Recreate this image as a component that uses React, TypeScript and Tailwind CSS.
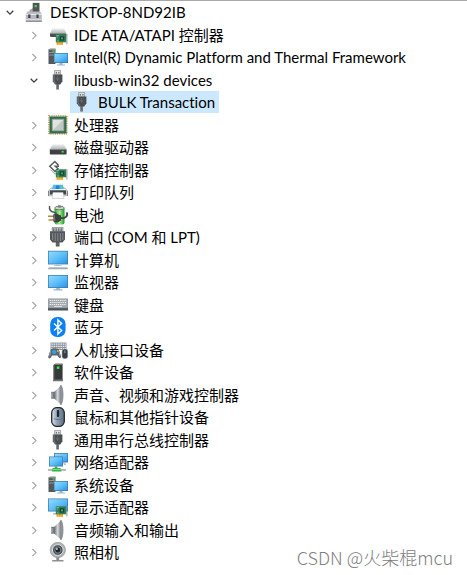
import { useState, type ReactNode } from "react";

function Defs() {
  return (
    <svg className="absolute h-0 w-0" aria-hidden="true">
      <defs>
        <linearGradient id="screen" x1="0" y1="0" x2="1" y2="1">
          <stop offset="0" stopColor="#8fdcff" />
          <stop offset="0.5" stopColor="#5fbff8" />
          <stop offset="1" stopColor="#2b93ea" />
        </linearGradient>
        <linearGradient id="metal" x1="0" y1="0" x2="1" y2="0">
          <stop offset="0" stopColor="#6c7076" />
          <stop offset="0.5" stopColor="#d8dadd" />
          <stop offset="1" stopColor="#7c8188" />
        </linearGradient>
        <linearGradient id="steel" x1="0" y1="0" x2="0" y2="1">
          <stop offset="0" stopColor="#f1f2f3" />
          <stop offset="1" stopColor="#adb0b3" />
        </linearGradient>
        <linearGradient id="battery" x1="0" y1="0" x2="1" y2="0">
          <stop offset="0" stopColor="#2a9c2f" />
          <stop offset="0.5" stopColor="#a4f095" />
          <stop offset="1" stopColor="#1e9328" />
        </linearGradient>
        <linearGradient id="mouse" x1="0" y1="0" x2="1" y2="0">
          <stop offset="0" stopColor="#dfe6ee" />
          <stop offset="0.4" stopColor="#93a4b8" />
          <stop offset="1" stopColor="#5d6d82" />
        </linearGradient>
      </defs>
    </svg>
  );
}

function Icon({ children }: { children: ReactNode }) {
  return (
    <svg viewBox="0 0 20 20" className="h-5 w-5 shrink-0" aria-hidden="true">
      {children}
    </svg>
  );
}

function Screen({ x, y, w, h }: { x: number; y: number; w: number; h: number }) {
  return (
    <>
      <rect x={x} y={y} width={w} height={h} fill="#3f78a6" />
      <rect x={x + 0.7} y={y + 0.7} width={w - 1.4} height={h - 1.4} fill="url(#screen)" />
    </>
  );
}

function Tower() {
  return (
    <>
      <path d="M0.5 2.5 2 1.7H7.5V17H0.5Z" fill="#54585c" />
      <path d="M0.5 2.5 2 1.7H7.5V3.2H0.5Z" fill="#8d9195" />
      <path d="M1.2 5.5H6.8M1.2 8H6.8" stroke="#a3a8ac" strokeWidth="0.8" />
      <rect x="4.5" y="3.3" width="2.2" height="1.4" fill="#37d13c" />
    </>
  );
}

function Card() {
  return (
    <g transform="translate(0 9)">
      <rect x="8.5" y="8" width="6.5" height="2.8" fill="#f0a01c" />
      <path d="M10.5 8.5V10.8M12.7 8.5V10.8" stroke="#ffd056" strokeWidth="0.6" />
      <rect x="7.8" y="0.3" width="10.5" height="8" fill="#2f8055" />
      <path d="M8.5 1.5H11M8.5 3H10M9 7H11" stroke="#8fcba6" strokeWidth="0.7" />
      <rect x="11.7" y="2.2" width="4.6" height="4.4" fill="#174632" />
      <rect x="13" y="3.4" width="2" height="2" fill="#4e9c75" />
      <path d="M18.9 0V10.5" stroke="#8b9095" strokeWidth="0.9" />
    </g>
  );
}

function RootIcon() {
  return (
    <Icon>
      <path d="M5.5 9.5V8L9 6V0.8H15.5V12H5.5Z" fill="#a4a8ab" />
      <path d="M8.7 1H15.3V10H8.7Z" fill="#505458" />
      <rect x="10.6" y="3" width="2.2" height="2.2" fill="#3fdc46" />
      <path d="M3.5 9.5H16L17.8 12V20H1.8V12Z" fill="#b6babe" />
      <path d="M1.8 12.3H17.8" stroke="#f1f2f3" strokeWidth="1" />
      <path d="M1.8 17.5H17.8" stroke="#d9dbdd" strokeWidth="1" />
      <path d="M5.3 12.6V16M13.5 12.6V16" stroke="#3e4246" strokeWidth="2.2" />
      <path d="M1.8 19.3H17.8" stroke="#888c90" strokeWidth="1" />
    </Icon>
  );
}

function IdeIcon() {
  return (
    <Icon>
      <path d="M4.2 3.4H16.2L18.2 8.6H2Z" fill="url(#steel)" />
      <path d="M2 8.6H18.2V12H3L2 11.2Z" fill="#4b4e51" />
      <path d="M2 8.6H18.2" stroke="#85898c" strokeWidth="0.6" />
      <Card />
    </Icon>
  );
}

function TowerScreenIcon() {
  return (
    <Icon>
      <Tower />
      <Screen x={5.8} y={6} w={14.2} h={10} />
      <path d="M11.5 16H14.5V17.5H17V18.4H9V17.5H11.5Z" fill="#9eb6c8" />
    </Icon>
  );
}

function UsbIcon() {
  return (
    <Icon>
      <path d="M6.6 0.4H12.6V5H6.6Z" fill="#dcdee0" stroke="#909498" strokeWidth="0.8" />
      <path d="M7.8 2.8H9M10.3 2.8H11.5" stroke="#505458" strokeWidth="1.2" />
      <path d="M4.8 4.4H14.4V11.2L12.3 14.5H7L4.8 11.2Z" fill="#4c4f52" />
      <path d="M6 5V11L7.5 13.5" stroke="#777b7f" strokeWidth="1" fill="none" />
      <path d="M9.6 6V11M7.9 8 9.6 10 11.4 8" stroke="#707478" strokeWidth="0.7" fill="none" />
      <path d="M9.6 14V19.5" stroke="#5c5f62" strokeWidth="2.6" />
      <path d="M8.3 16H11M8.3 18H11" stroke="#9a9da0" strokeWidth="0.5" />
    </Icon>
  );
}

function ChipIcon() {
  return (
    <Icon>
      <rect x="0.9" y="0.9" width="18" height="18" fill="none" stroke="#c5a855" strokeWidth="1.6" strokeDasharray="1 0.8" />
      <rect x="1.5" y="1.5" width="17" height="17" fill="#356a51" />
      <rect x="4.2" y="4.2" width="11.6" height="11.6" fill="#bfc8c2" stroke="#98ac9f" strokeWidth="0.8" />
      <path d="M5 15V5H15Z" fill="#e0e4e1" />
    </Icon>
  );
}

function DiskIcon() {
  return (
    <Icon>
      <path d="M4.5 7.2H15.8L18.6 12.6H1.8Z" fill="url(#steel)" />
      <path d="M1.8 12.4H18.6V17L18 17.5H2.4L1.8 17Z" fill="#3e4144" />
      <path d="M1.8 12.6H18.6" stroke="#7b7f82" strokeWidth="0.6" />
      <rect x="13.6" y="13.8" width="2.2" height="1.8" fill="#35df3b" />
    </Icon>
  );
}

function StorageIcon() {
  return (
    <Icon>
      <path d="M10.5 5.2 6.8 1.5 1.8 6.3 7 11.5 10 8.7 7.3 6.2H11" fill="none" stroke="#595d61" strokeWidth="1.5" />
      <path d="M2.5 9.8 7 14.2 9 12.5" fill="none" stroke="#a2a6aa" strokeWidth="1" />
      <Card />
    </Icon>
  );
}

function PrinterIcon() {
  return (
    <Icon>
      <path d="M3 5.5H17L20 8.5V14.2H0V8.5Z" fill="#bfc3c7" />
      <path d="M5 2.8H15L16 7.5H4Z" fill="#58b8ef" />
      <path d="M8 3.5H11.5V7.5H7.6Z" fill="#2482d8" />
      <path d="M12 3.5H14L14.8 7.5H12Z" fill="#48cab0" />
      <path d="M2.3 7H17.7L18.4 8.2H1.6Z" fill="#eff1f2" />
      <path d="M2 8.3H18V12.5H2Z" fill="#43484c" />
      <path d="M0.4 9V14M19.6 9V14" stroke="#71767b" strokeWidth="0.9" />
      <path d="M5 10.5H15L16 16.5H4Z" fill="#fafafa" stroke="#bfc3c6" strokeWidth="0.6" />
    </Icon>
  );
}

function BatteryIcon() {
  return (
    <Icon>
      <rect x="6.5" y="2" width="10" height="17.5" rx="2.2" fill="url(#battery)" />
      <ellipse cx="11.5" cy="3" rx="4.8" ry="1.8" fill="#c9d6c8" stroke="#4b5c4d" strokeWidth="0.7" />
      <ellipse cx="11.5" cy="1.5" rx="2.2" ry="1.2" fill="#7d8387" />
      <path d="M1.6 1C0.8 5 3 6.8 6 7.2 9 7.5 8 10 8.5 11" stroke="#505458" strokeWidth="1.5" fill="none" />
      <path d="M0 11.3H6M0.5 15H6" stroke="#b08b35" strokeWidth="1.5" />
      <path d="M5.2 9.5 8.5 8.8 13 10.5V15.5L9.5 17.5 5.6 17Z" fill="#3c3f41" />
      <path d="M12.5 13C17 14 20.5 11 18.6 7.3" fill="none" stroke="#404346" strokeWidth="1.8" />
      <path d="M6.4 10.3 6.8 16" stroke="#85888a" strokeWidth="0.8" />
    </Icon>
  );
}

function PortIcon() {
  return (
    <Icon>
      <path d="M4.2 0.3H15V4.8H4.2Z" fill="#b9bcbf" stroke="#777b7f" strokeWidth="0.7" />
      <path d="M5.8 1.5V4M8.2 1.5V4M10.8 1.5V4M13.2 1.5V4" stroke="#45484b" strokeWidth="0.9" />
      <path d="M2 4.3H17V12.5L14.5 15.5H11.5V19.5H7.8V15.5H4.5L2 12.5Z" fill="#55585b" />
      <path d="M4.6 6V13M7.2 6V14M9.8 6V14M12.4 6V14M14.8 6V13" stroke="#94979a" strokeWidth="0.8" />
      <path d="M7.8 17H11.5" stroke="#888b8e" strokeWidth="0.6" />
    </Icon>
  );
}

function ComputerIcon() {
  return (
    <Icon>
      <Screen x={0} y={0.8} w={20} h={13.6} />
      <path d="M8.5 14.4H11.5V15.3H14V16.1H6V15.3H8.5Z" fill="#abc0d0" />
      <path d="M1 17H19L20 19H0Z" fill="#b8c7d3" />
      <path d="M0 18.8H20" stroke="#8395a3" strokeWidth="0.7" />
    </Icon>
  );
}

function MonitorIcon() {
  return (
    <Icon>
      <Screen x={0} y={3} w={20} h={13} />
      <path d="M8.2 16H11.8V17.3H14.5V18.4H5.5V17.3H8.2Z" fill="#9fb6c9" />
    </Icon>
  );
}

function KeyboardIcon() {
  return (
    <Icon>
      <path d="M0 3.5H20V14.5H0Z" fill="#8e949b" />
      <path d="M0.5 4H19.5V12.5H0.5Z" fill="#a3a9af" />
      <path d="M1.5 5.5H18.5M2 7.5H18M1.5 9.5H18.5" stroke="#e6e8ea" strokeWidth="1.1" strokeDasharray="1.4 0.7" />
      <path d="M6 11.4H14" stroke="#e6e8ea" strokeWidth="0.9" />
      <path d="M0 13.2H20V15.5H0Z" fill="#4c535b" />
    </Icon>
  );
}

function BluetoothIcon() {
  return (
    <Icon>
      <rect x="2.2" y="0" width="15.4" height="20" rx="7" fill="#0a80f2" />
      <path d="M6 6.4 13.6 13.5 9.9 17V3L13.6 6.5 6 13.6" stroke="#fff" strokeWidth="1.4" fill="none" />
    </Icon>
  );
}

function HidIcon() {
  return (
    <Icon>
      <path d="M2.5 2.5H18.5V10H2.5Z" fill="#8f969e" />
      <path d="M3.3 4.2H18M3.3 6.4H18M3.3 8.5H18" stroke="#e6e9ec" strokeWidth="1.2" strokeDasharray="1.5 0.8" />
      <path d="M2.8 9.3C5 8 8.3 8 10.8 9.3L13 16.5C13 19 11.2 19 9.5 15.5H4C2.8 19 0.2 19.2 0.2 16.8Z" fill="#5e676f" />
      <path d="M2.5 11 1.8 16M11 11 12 16" stroke="#98a1a8" strokeWidth="1" />
      <circle cx="6.2" cy="12" r="2.1" fill="#2aa4ef" />
      <circle cx="9.8" cy="11" r="0.9" fill="#efb634" />
      <rect x="14" y="9" width="5.8" height="9.7" rx="2.4" fill="#363e46" stroke="#a5adb3" strokeWidth="0.6" />
      <path d="M16.9 10.5V13" stroke="#b4bdc5" strokeWidth="0.8" />
    </Icon>
  );
}

function SoftwareIcon() {
  return (
    <Icon>
      <path d="M5.5 3 7 1.8H14.6V18H5.5Z" fill="#36393b" />
      <path d="M5.5 3 7 1.8H14.6V3Z" fill="#787c7f" />
      <path d="M6 3V17" stroke="#6a6e71" strokeWidth="0.8" />
      <rect x="8.8" y="4.4" width="2.6" height="2.5" fill="#30ed37" />
      <path d="M5 17.5H15V19.3H5Z" fill="#727679" />
    </Icon>
  );
}

function SpeakerIcon() {
  return (
    <Icon>
      <path d="M3.2 6.8H7V13.7H3.2Z" fill="#737980" />
      <path d="M6.4 6.8 12.8 0.5V19.5L6.4 13.7Z" fill="url(#metal)" />
      <path d="M12.8 0C15.8 3 15.8 17 12.8 20Z" fill="#959ba3" stroke="#70767e" strokeWidth="0.6" />
      <path d="M4 8V12.5" stroke="#b9bec3" strokeWidth="1" />
    </Icon>
  );
}

function MouseIcon() {
  return (
    <Icon>
      <rect x="3.7" y="0.6" width="12.6" height="18.8" rx="5.2" fill="url(#mouse)" stroke="#24282d" strokeWidth="1.3" />
      <path d="M5.8 11.5C8 13 12 13 14.3 11.5" fill="none" stroke="#586577" strokeWidth="0.7" />
      <rect x="8.9" y="3" width="2.3" height="7" rx="1" fill="#22272d" />
    </Icon>
  );
}

function NetworkIcon() {
  return (
    <Icon>
      <Screen x={6} y={1} w={14} h={9.5} />
      <path d="M16 10.5V12.2H18" stroke="#93a8b8" strokeWidth="1" fill="none" />
      <Screen x={1} y={4.5} w={14} h={10} />
      <path d="M8 14.5V16.5" stroke="#39a548" strokeWidth="2.6" />
      <path d="M0 17.9H18" stroke="#b3b8b7" strokeWidth="2" />
      <path d="M4.5 16H12.5L13.5 19.5H4Z" fill="#33b64a" />
      <path d="M4.5 17.5H13" stroke="#88df92" strokeWidth="0.8" />
    </Icon>
  );
}

function DisplayIcon() {
  return (
    <Icon>
      <Screen x={0} y={1.5} w={20} h={13} />
      <path d="M5 16.8H9" stroke="#9eb2c1" strokeWidth="1.3" />
      <Card />
    </Icon>
  );
}

function CameraIcon() {
  return (
    <Icon>
      <path d="M8.3 15H11.2V18H15.5V19.5H4.2V18H8.3Z" fill="#8c8f92" />
      <circle cx="9.8" cy="8" r="7.7" fill="#b1b4b7" stroke="#8a8e91" strokeWidth="0.6" />
      <circle cx="9.8" cy="8" r="5.4" fill="#54585c" stroke="#e7e8e9" strokeWidth="0.9" />
      <circle cx="9.8" cy="8" r="3" fill="#20262c" stroke="#8798a7" strokeWidth="0.8" />
      <circle cx="8.9" cy="7" r="1" fill="#b3d0e4" />
    </Icon>
  );
}

type Node = {
  label: string;
  level: 0 | 1 | 2;
  icon: () => ReactNode;
  open?: boolean;
};

const nodes: Node[] = [
  { label: "DESKTOP-8ND92IB", level: 0, icon: RootIcon, open: true },
  { label: "IDE ATA/ATAPI 控制器", level: 1, icon: IdeIcon },
  { label: "Intel(R) Dynamic Platform and Thermal Framework", level: 1, icon: TowerScreenIcon },
  { label: "libusb-win32 devices", level: 1, icon: UsbIcon, open: true },
  { label: "BULK Transaction", level: 2, icon: UsbIcon },
  { label: "处理器", level: 1, icon: ChipIcon },
  { label: "磁盘驱动器", level: 1, icon: DiskIcon },
  { label: "存储控制器", level: 1, icon: StorageIcon },
  { label: "打印队列", level: 1, icon: PrinterIcon },
  { label: "电池", level: 1, icon: BatteryIcon },
  { label: "端口 (COM 和 LPT)", level: 1, icon: PortIcon },
  { label: "计算机", level: 1, icon: ComputerIcon },
  { label: "监视器", level: 1, icon: MonitorIcon },
  { label: "键盘", level: 1, icon: KeyboardIcon },
  { label: "蓝牙", level: 1, icon: BluetoothIcon },
  { label: "人机接口设备", level: 1, icon: HidIcon },
  { label: "软件设备", level: 1, icon: SoftwareIcon },
  { label: "声音、视频和游戏控制器", level: 1, icon: SpeakerIcon },
  { label: "鼠标和其他指针设备", level: 1, icon: MouseIcon },
  { label: "通用串行总线控制器", level: 1, icon: UsbIcon },
  { label: "网络适配器", level: 1, icon: NetworkIcon },
  { label: "系统设备", level: 1, icon: TowerScreenIcon },
  { label: "显示适配器", level: 1, icon: DisplayIcon },
  { label: "音频输入和输出", level: 1, icon: SpeakerIcon },
  { label: "照相机", level: 1, icon: CameraIcon },
];

const indent = ["pl-1", "pl-7", "pl-[52px]"];

function Chevron({ open }: { open?: boolean }) {
  return (
    <svg viewBox="0 0 12 12" className="h-3 w-3" fill="none" aria-hidden="true">
      {open ? (
        <path d="M2.7 4.8 6 8.1 9.3 4.8" stroke="#404040" strokeWidth="1.3" />
      ) : (
        <path d="M4.4 3 8 6.6 4.4 10.2" stroke="#a6a6a6" strokeWidth="1.2" />
      )}
    </svg>
  );
}

export default function App() {
  const [selected, setSelected] = useState("BULK Transaction");

  return (
    <main className="relative min-h-screen overflow-hidden border-t border-[#a8a8a8] bg-white font-['Lato','Noto_Sans_CJK_SC',sans-serif] text-black">
      <Defs />
      <ul role="tree" aria-label="DESKTOP-8ND92IB">
        {nodes.map(({ label, level, icon: NodeIcon, open }) => (
          <li
            key={label}
            role="treeitem"
            aria-level={level + 1}
            aria-selected={selected === label}
            className={`flex items-center odd:h-[22px] even:h-[23px] ${indent[level]}`}
          >
            {level < 2 ? (
              <button type="button" aria-label={label} aria-expanded={!!open} className="w-3 shrink-0">
                <Chevron open={open} />
              </button>
            ) : (
              <span className="w-3 shrink-0" />
            )}
            <button
              type="button"
              onClick={() => setSelected(label)}
              className={`ml-1.5 flex h-full items-center gap-1.5 pr-1 pl-0.5 text-[15px] leading-5 whitespace-nowrap [font-variant-ligatures:none] ${
                selected === label ? "bg-[#cce8ff]" : ""
              }`}
            >
              <NodeIcon />
              <span>{label}</span>
            </button>
          </li>
        ))}
      </ul>

      {/* Watermark */}
      <div className="absolute right-3.5 bottom-1.5 font-['Noto_Sans_CJK_SC',sans-serif] text-lg leading-6 font-light text-[#808080]">
        CSDN @火柴棍mcu
      </div>
    </main>
  );
}
